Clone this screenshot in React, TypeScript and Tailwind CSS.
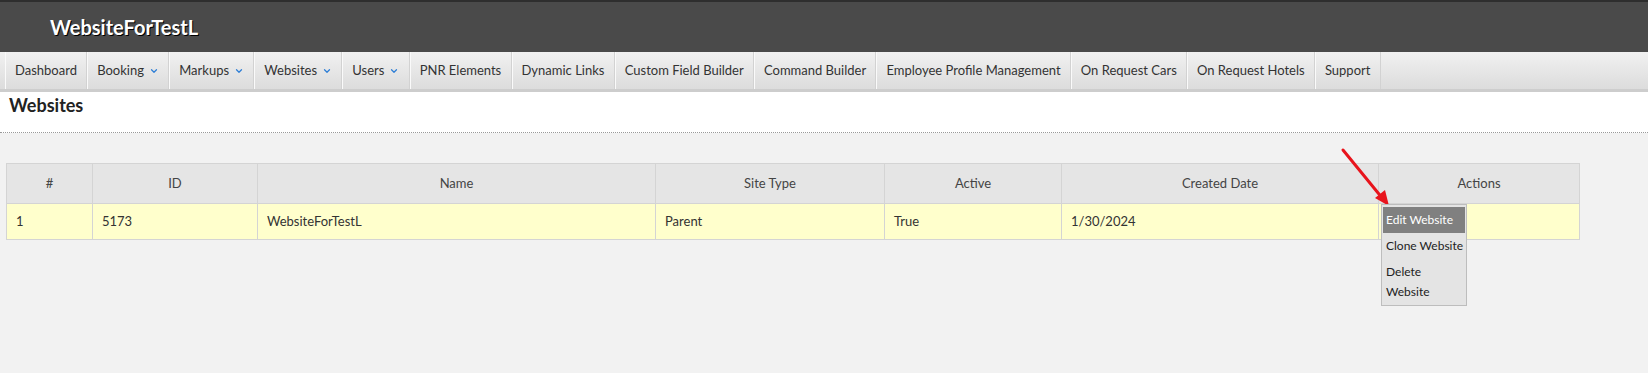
import { ChevronDown } from 'lucide-react';

const navItems = [
  { label: 'Dashboard' },
  { label: 'Booking', menu: true },
  { label: 'Markups', menu: true },
  { label: 'Websites', menu: true },
  { label: 'Users', menu: true },
  { label: 'PNR Elements' },
  { label: 'Dynamic Links' },
  { label: 'Custom Field Builder' },
  { label: 'Command Builder' },
  { label: 'Employee Profile Management' },
  { label: 'On Request Cars' },
  { label: 'On Request Hotels' },
  { label: 'Support' },
];

export default function App() {
  return (
    <div className="relative min-h-screen bg-[#f2f2f2] font-['Lato',sans-serif] text-[#333]">
      {/* Top bar */}
      <header className="flex h-[52px] items-center border-t-2 border-[#2e2e2e] bg-[#4a4a4a] pl-[50px]">
        <span className="text-[20px] font-bold text-white [text-shadow:1px_1px_0_#000]">WebsiteForTestL</span>
      </header>

      {/* Main navigation */}
      <nav className="flex h-[40px] border-b-[3px] border-[#cdcdcd] bg-gradient-to-b from-[#f1f1f1] to-[#dcdcdc] pl-[5px]">
        {navItems.map((item) => (
          <div
            key={item.label}
            className="flex items-center gap-[5px] border-l border-r border-l-[#fafafa] border-r-[#d2d2d2] pl-[9px] pr-[9.25px] text-[13px] text-[#333]"
          >
            <span>{item.label}</span>
            {item.menu && <ChevronDown size={10} strokeWidth={3} className="text-[#2f7fd6]" />}
          </div>
        ))}
      </nav>

      {/* Page title */}
      <div className="h-[41px] border-b border-dotted border-[#999] bg-white pl-[9px] pt-[2px]">
        <h1 className="text-[18px] font-bold leading-[22px] text-[#222]">Websites</h1>
      </div>

      {/* Websites table */}
      <div className="ml-[6px] mt-[30px] w-[1573px]">
        <table className="w-full table-fixed border-collapse text-[13px]">
          <colgroup>
            <col className="w-[86px]" />
            <col className="w-[165px]" />
            <col className="w-[398px]" />
            <col className="w-[229px]" />
            <col className="w-[177px]" />
            <col className="w-[317px]" />
            <col className="w-[201px]" />
          </colgroup>
          <thead>
            <tr className="h-[40px] bg-[#e5e5e5] text-[#444]">
              {['#', 'ID', 'Name', 'Site Type', 'Active', 'Created Date', 'Actions'].map((h) => (
                <th key={h} className="border border-[#d4d4d4] text-center font-normal">
                  {h}
                </th>
              ))}
            </tr>
          </thead>
          <tbody>
            <tr className="h-[36px] bg-[#ffffcc]">
              <td className="border border-[#d4d4d4] pl-[9px]">1</td>
              <td className="border border-[#d4d4d4] pl-[9px]">5173</td>
              <td className="border border-[#d4d4d4] pl-[9px]">WebsiteForTestL</td>
              <td className="border border-[#d4d4d4] pl-[9px]">Parent</td>
              <td className="border border-[#d4d4d4] pl-[9px]">True</td>
              <td className="border border-[#d4d4d4] pl-[9px]">1/30/2024</td>
              <td className="relative border border-[#d4d4d4]">
                {/* Actions dropdown */}
                <div className="absolute left-[2px] top-0 z-10 w-[86px] border border-[#bdbdbd] bg-[#e4e4e4] px-[1px] pt-[2px] text-[12px] leading-[20px] text-[#222]">
                  <div className="whitespace-nowrap bg-[#808080] px-[3px] py-[3px] text-white">Edit Website</div>
                  <div className="whitespace-nowrap px-[3px] py-[3px]">Clone Website</div>
                  <div className="px-[3px] py-[3px]">
                    Delete
                    <br />
                    Website
                  </div>
                </div>
              </td>
            </tr>
          </tbody>
        </table>
      </div>

      {/* Annotation arrow */}
      <svg className="absolute left-[1336px] top-[144px]" width="60" height="66" viewBox="0 0 60 66">
        <line x1="7" y1="6" x2="47" y2="55" stroke="#e8141c" strokeWidth="3" strokeLinecap="round" />
        <polygon points="53,62 39,54 49,46" fill="#e8141c" />
      </svg>
    </div>
  );
}
